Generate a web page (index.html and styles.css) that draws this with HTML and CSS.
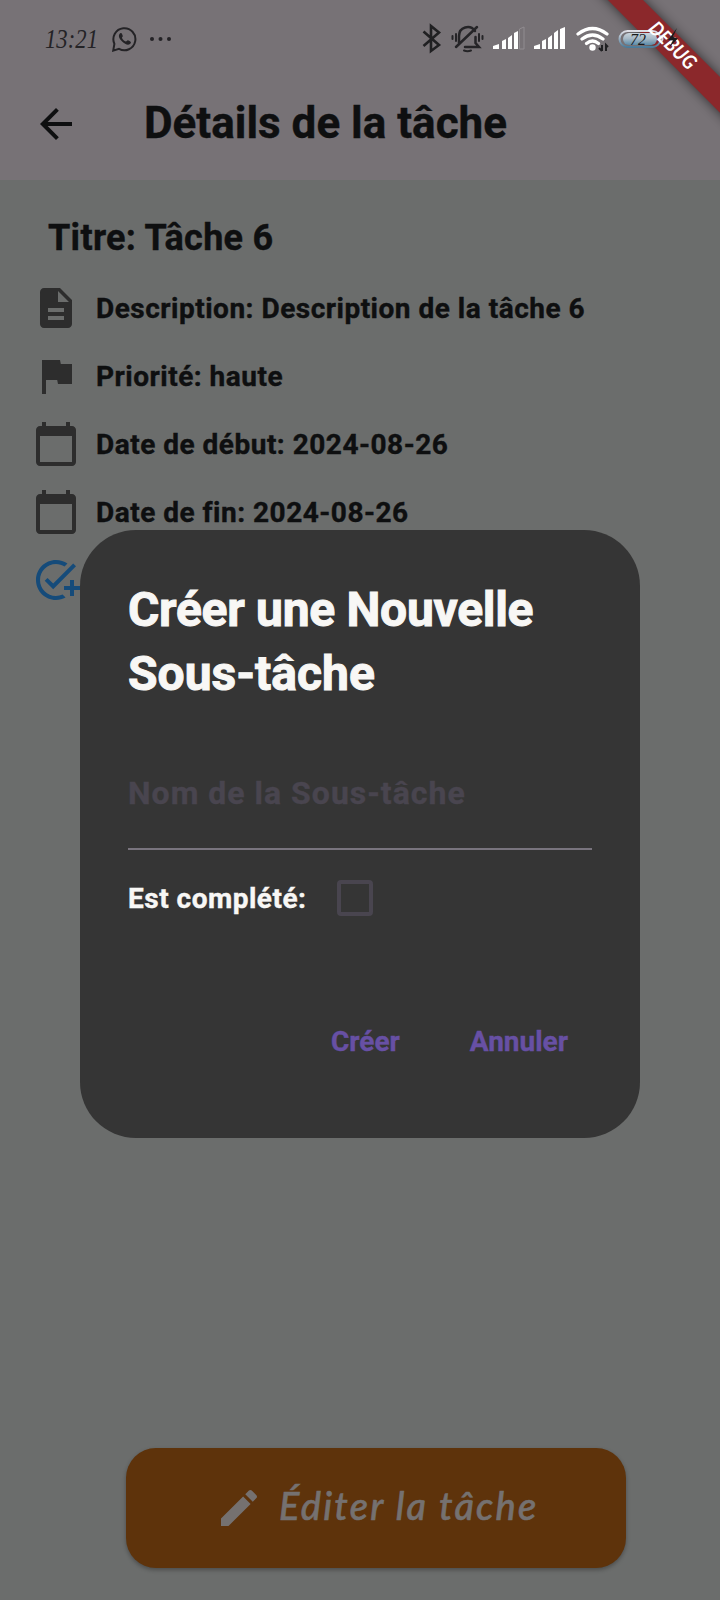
FILE: index.html
```html
<!DOCTYPE html>
<html lang="fr">
<head>
<meta charset="utf-8">
<title>Détails de la tâche</title>
<link rel="stylesheet" href="styles.css">
</head>
<body>
<div class="screen">
  <svg class="ribbon" width="150" height="150" viewBox="570 0 150 150">
    <defs><filter id="blur" x="-50%" y="-50%" width="200%" height="200%"><feGaussianBlur stdDeviation="6"/></filter></defs>
    <path d="M588-20h35L740 97v36z" fill="#000" opacity=".6" filter="url(#blur)"/>
    <path d="M588-20h35L740 97v36z" fill="#8b282b"/>
  </svg>
  <header class="header">
    <div class="status">
      <svg class="clock" width="68" height="36" viewBox="0 0 68 36"><text x="1" y="27" textLength="53" lengthAdjust="spacingAndGlyphs">13:21</text></svg>
      <svg class="whatsapp" width="26" height="26" viewBox="0 0 26 26"><path d="M1.200 24.600l1.200-6.800A11 11 0 1 1 7 22.800z" fill="none" stroke="#242326" stroke-width="2"/><path d="M8.600 7c-3 2-1.600 5.500 1.500 8.500s7 4.600 8.700 1.500c.5-1-.2-1.500-2.800-2.700-.8-.3-1.500 1.400-2.200 1.200-1.500-.5-3-2-3.800-3.600-.3-.6 1-1.200.8-2-.7-2-1.200-3.400-2.200-2.900z" fill="#242326"/></svg>
      <svg class="dots" width="24" height="6" viewBox="0 0 24 6"><g fill="#242326"><circle cx="3" cy="3" r="2"/><circle cx="11.500" cy="3" r="2"/><circle cx="20" cy="3" r="2"/></g></svg>
      <svg class="indicators" width="262" height="34" viewBox="420 22 262 34">
        <path d="M423.500 31.500L439 45l-8 6V26l8 6.500-15.500 13.500" fill="none" stroke="#202022" stroke-width="2.600"/>
        <g fill="none" stroke="#252427" stroke-width="2.500" stroke-linecap="round"><path d="M459 43V36c0-9 11-12 16-5M465 47h14l-3.500-4v-6M456 47l21-20"/><path d="M456 34v7M452.500 36v3M479 34v7M482.500 36v3M464 50.500q3.500 1.500 7 0" stroke-width="2"/></g>
        <g fill="#fff"><path d="M493 49v-3l6-2v5zM502 49v-8l4-2v10zM508 49V38l4-3v14zM514 49V33l4-2v18z"/><path d="M519.500 49V29l4.500-2v22z" fill="none" stroke="#918c90"/><path d="M534 49v-3l6-2v5zM542 49v-8l4-2v10zM548 49V38l4-3v14zM554 49V33l4-3v19zM560 49V29l5-2v22z"/></g>
        <g fill="none" stroke="#fff" stroke-width="3.200" stroke-linecap="round"><path d="M578 34q14.500-11 29 0M582 39q10.500-8 21 0M586.500 43.500q6-5 12 0"/></g><circle cx="592.500" cy="47.500" r="3.200" fill="#fff"/>
        <path d="M602 45v6M599 48l3 3M606 51v-6l2 2" stroke="#202022" stroke-width="2" fill="none"/>
        <defs><linearGradient id="bat" x2="0" y2="1"><stop stop-color="#c9d4dc"/><stop offset=".45" stop-color="#a9bac7"/><stop offset="1" stop-color="#5b8ba8"/></linearGradient><linearGradient id="rim" x2="0" y2="1"><stop stop-color="#e0dfe6"/><stop offset="1" stop-color="#4b7b9a"/></linearGradient></defs>
        <rect x="623" y="33" width="34" height="12" rx="6" fill="url(#bat)"/>
        <rect x="619.500" y="31" width="41" height="16" rx="8" fill="none" stroke="url(#rim)" stroke-width="2"/>
        <path d="M661 36q3 3 0 6" fill="none" stroke="#d0d0d8" stroke-width="2"/>
        <text class="battery-level" x="630" y="45" textLength="16" lengthAdjust="spacingAndGlyphs">72</text>
      </svg>
    </div>
    <div class="appbar">
      <svg width="48" height="48" viewBox="0 0 24 24"><path d="M20 11H7.830l5.590-5.590L12 4l-8 8 8 8 1.410-1.410L7.830 13H20v-2z" fill="#0e0f10"/></svg>
      <h1 class="appbar-title">Détails de la tâche</h1>
    </div>
  </header>
  <svg class="ribbon ribbon-label" width="150" height="150" viewBox="570 0 150 150">
    <text class="debug" transform="translate(672 46) rotate(45)" text-anchor="middle" y="6" textLength="58" lengthAdjust="spacingAndGlyphs">DEBUG</text>
    <path d="M677 28l-9 12 5 .5-4 7 9-9-5-1.500z" fill="#191a1d"/>
  </svg>
  <main class="details">
    <h2 class="task-title">Titre: Tâche 6</h2>
    <div class="row"><svg viewBox="0 0 24 24"><path d="M14 2H6c-1.100 0-1.990.9-1.990 2L4 20c0 1.100.89 2 1.990 2H18c1.100 0 2-.9 2-2V8l-6-6zm2 16H8v-2h8v2zm0-4H8v-2h8v2zm-3-5V3.500L18.500 9H13z"/></svg><span>Description: Description de la tâche 6</span></div>
    <div class="row"><svg viewBox="0 0 24 24"><path d="M14.400 6L14 4H5v17h2v-7h5.600l.4 2h7V6z"/></svg><span>Priorité: haute</span></div>
    <div class="row"><svg viewBox="0 0 24 24"><path d="M20 3h-1V1h-2v2H7V1H5v2H4c-1.100 0-2 .9-2 2v16c0 1.100.9 2 2 2h16c1.100 0 2-.9 2-2V5c0-1.100-.9-2-2-2zm0 18H4V8h16v13z"/></svg><span>Date de début: 2024-08-26</span></div>
    <div class="row"><svg viewBox="0 0 24 24"><path d="M20 3h-1V1h-2v2H7V1H5v2H4c-1.100 0-2 .9-2 2v16c0 1.100.9 2 2 2h16c1.100 0 2-.9 2-2V5c0-1.100-.9-2-2-2zm0 18H4V8h16v13z"/></svg><span>Date de fin: 2024-08-26</span></div>
    <div class="row add"><svg viewBox="0 0 24 24"><path d="M22 5.180L10.590 16.600l-4.240-4.240 1.410-1.410 2.830 2.830 10-10L22 5.180zM12 20c-4.410 0-8-3.590-8-8s3.590-8 8-8c1.570 0 3.040.46 4.280 1.250l1.450-1.450C16.100 2.670 14.130 2 12 2 6.480 2 2 6.480 2 12s4.480 10 10 10c1.730 0 3.360-.44 4.780-1.220l-1.500-1.500c-1 .46-2.110.72-3.280.72zm7-5h-3v2h3v3h2v-3h3v-2h-3v-3h-2v3z"/></svg></div>
    <button class="edit">
      <svg width="48" height="48" viewBox="0 0 24 24"><path d="M3 17.250V21h3.750L17.810 9.940l-3.750-3.750L3 17.250zM20.710 7.040c.39-.39.39-1.020 0-1.410l-2.340-2.340c-.39-.39-1.020-.39-1.410 0l-1.830 1.830 3.750 3.750 1.830-1.830z"/></svg>
      <span>Éditer la tâche</span>
    </button>
  </main>
  <section class="dialog" role="dialog">
    <h2 class="dialog-title"><span>Créer une Nouvelle</span><br>Sous-tâche</h2>
    <div class="field">Nom de la Sous-tâche</div>
    <div class="check-row"><span>Est complété:</span><i class="checkbox"></i></div>
    <div class="actions"><button class="action">Créer</button><button class="action">Annuler</button></div>
  </section>
</div>
</body>
</html>
```

FILE: styles.css
```css
* { box-sizing: border-box; }
body { margin: 0; font-family: Roboto, sans-serif; font-weight: 700; }
button { border: 0; background: none; padding: 0; font: inherit; }
h1, h2 { margin: 0; font-weight: 800; }
svg { flex: none; display: block; }
.screen { position: relative; width: 720px; height: 1600px; overflow: hidden; display: flex; flex-direction: column; background: #6b6d6c; color: #0e0f10; -webkit-text-stroke: .4px currentColor; }
.header { height: 180px; background: #777276; }
.status { position: relative; z-index: 2; height: 68px; padding: 10px 38px 0 44px; display: flex; align-items: center; -webkit-text-stroke: 0; }
.clock { font: italic 400 27px "Liberation Serif", serif; fill: #242326; }
.whatsapp { margin-right: 11px; }
.indicators { margin-left: auto; }
.battery-level { font: italic 400 17px "Liberation Serif", serif; fill: #17191c; }
.ribbon { position: absolute; top: 0; right: 0; z-index: 1; -webkit-text-stroke: 0; }
.ribbon-label { z-index: 3; }
.debug { font: italic 700 20px Lato, sans-serif; fill: #fff; }
.appbar { height: 112px; padding: 0 32px; display: flex; align-items: center; gap: 64px; }
.appbar-title { font-weight: 700; font-size: 44px; line-height: 54px; padding-bottom: 2px; white-space: nowrap; }
.details { flex: 1; display: flex; flex-direction: column; padding: 32px 32px; }
.task-title { padding-left: 16px; font-weight: 700; font-size: 36px; line-height: 52px; letter-spacing: .3px; margin-bottom: 10px; white-space: nowrap; }
.row { height: 68px; display: flex; align-items: center; gap: 16px; font-size: 28px; letter-spacing: .5px; white-space: nowrap; }
.row svg { width: 48px; height: 48px; fill: #2d2d2d; }
.row.add svg { fill: #154b7a; }
.edit { width: 500px; height: 120px; margin: auto 0 0 94px; border-radius: 30px; background: #5e330b; color: #757170; box-shadow: 0 2px 4px rgba(0,0,0,.3); display: flex; align-items: center; gap: 16px; padding-left: 89px; white-space: nowrap; font: italic 500 38px/48px Lato, sans-serif; letter-spacing: 2.200px; -webkit-text-stroke: .6px currentColor; }
.edit svg { fill: currentColor; }
.edit span { padding-bottom: 7px; }
.dialog { position: absolute; z-index: 5; left: 80px; top: 530px; width: 560px; height: 608px; border-radius: 56px; background: #353535; color: #f8f7f5; padding: 48px; display: flex; flex-direction: column; }
.dialog-title { font-weight: 700; font-size: 48px; line-height: 64px; white-space: nowrap; -webkit-text-stroke: 1px currentColor; }
.dialog-title span { letter-spacing: -.3px; }
.field { margin-top: 32px; height: 112px; border-bottom: 2px solid #79747e; padding-top: 31px; font-size: 32px; line-height: 48px; letter-spacing: 1px; color: #49454f; }
.check-row { height: 96px; display: flex; align-items: center; font-size: 28px; letter-spacing: .5px; }
.check-row span { width: 208.500px; }
.checkbox { width: 36px; height: 36px; border: 4px solid #49454f; border-radius: 4px; }
.actions { display: flex; justify-content: flex-end; gap: 70px; margin-top: 48px; padding-right: 24px; }
.action { color: #6750a4; font-size: 28px; line-height: 40px; height: 96px; -webkit-text-stroke: .4px currentColor; }
```
